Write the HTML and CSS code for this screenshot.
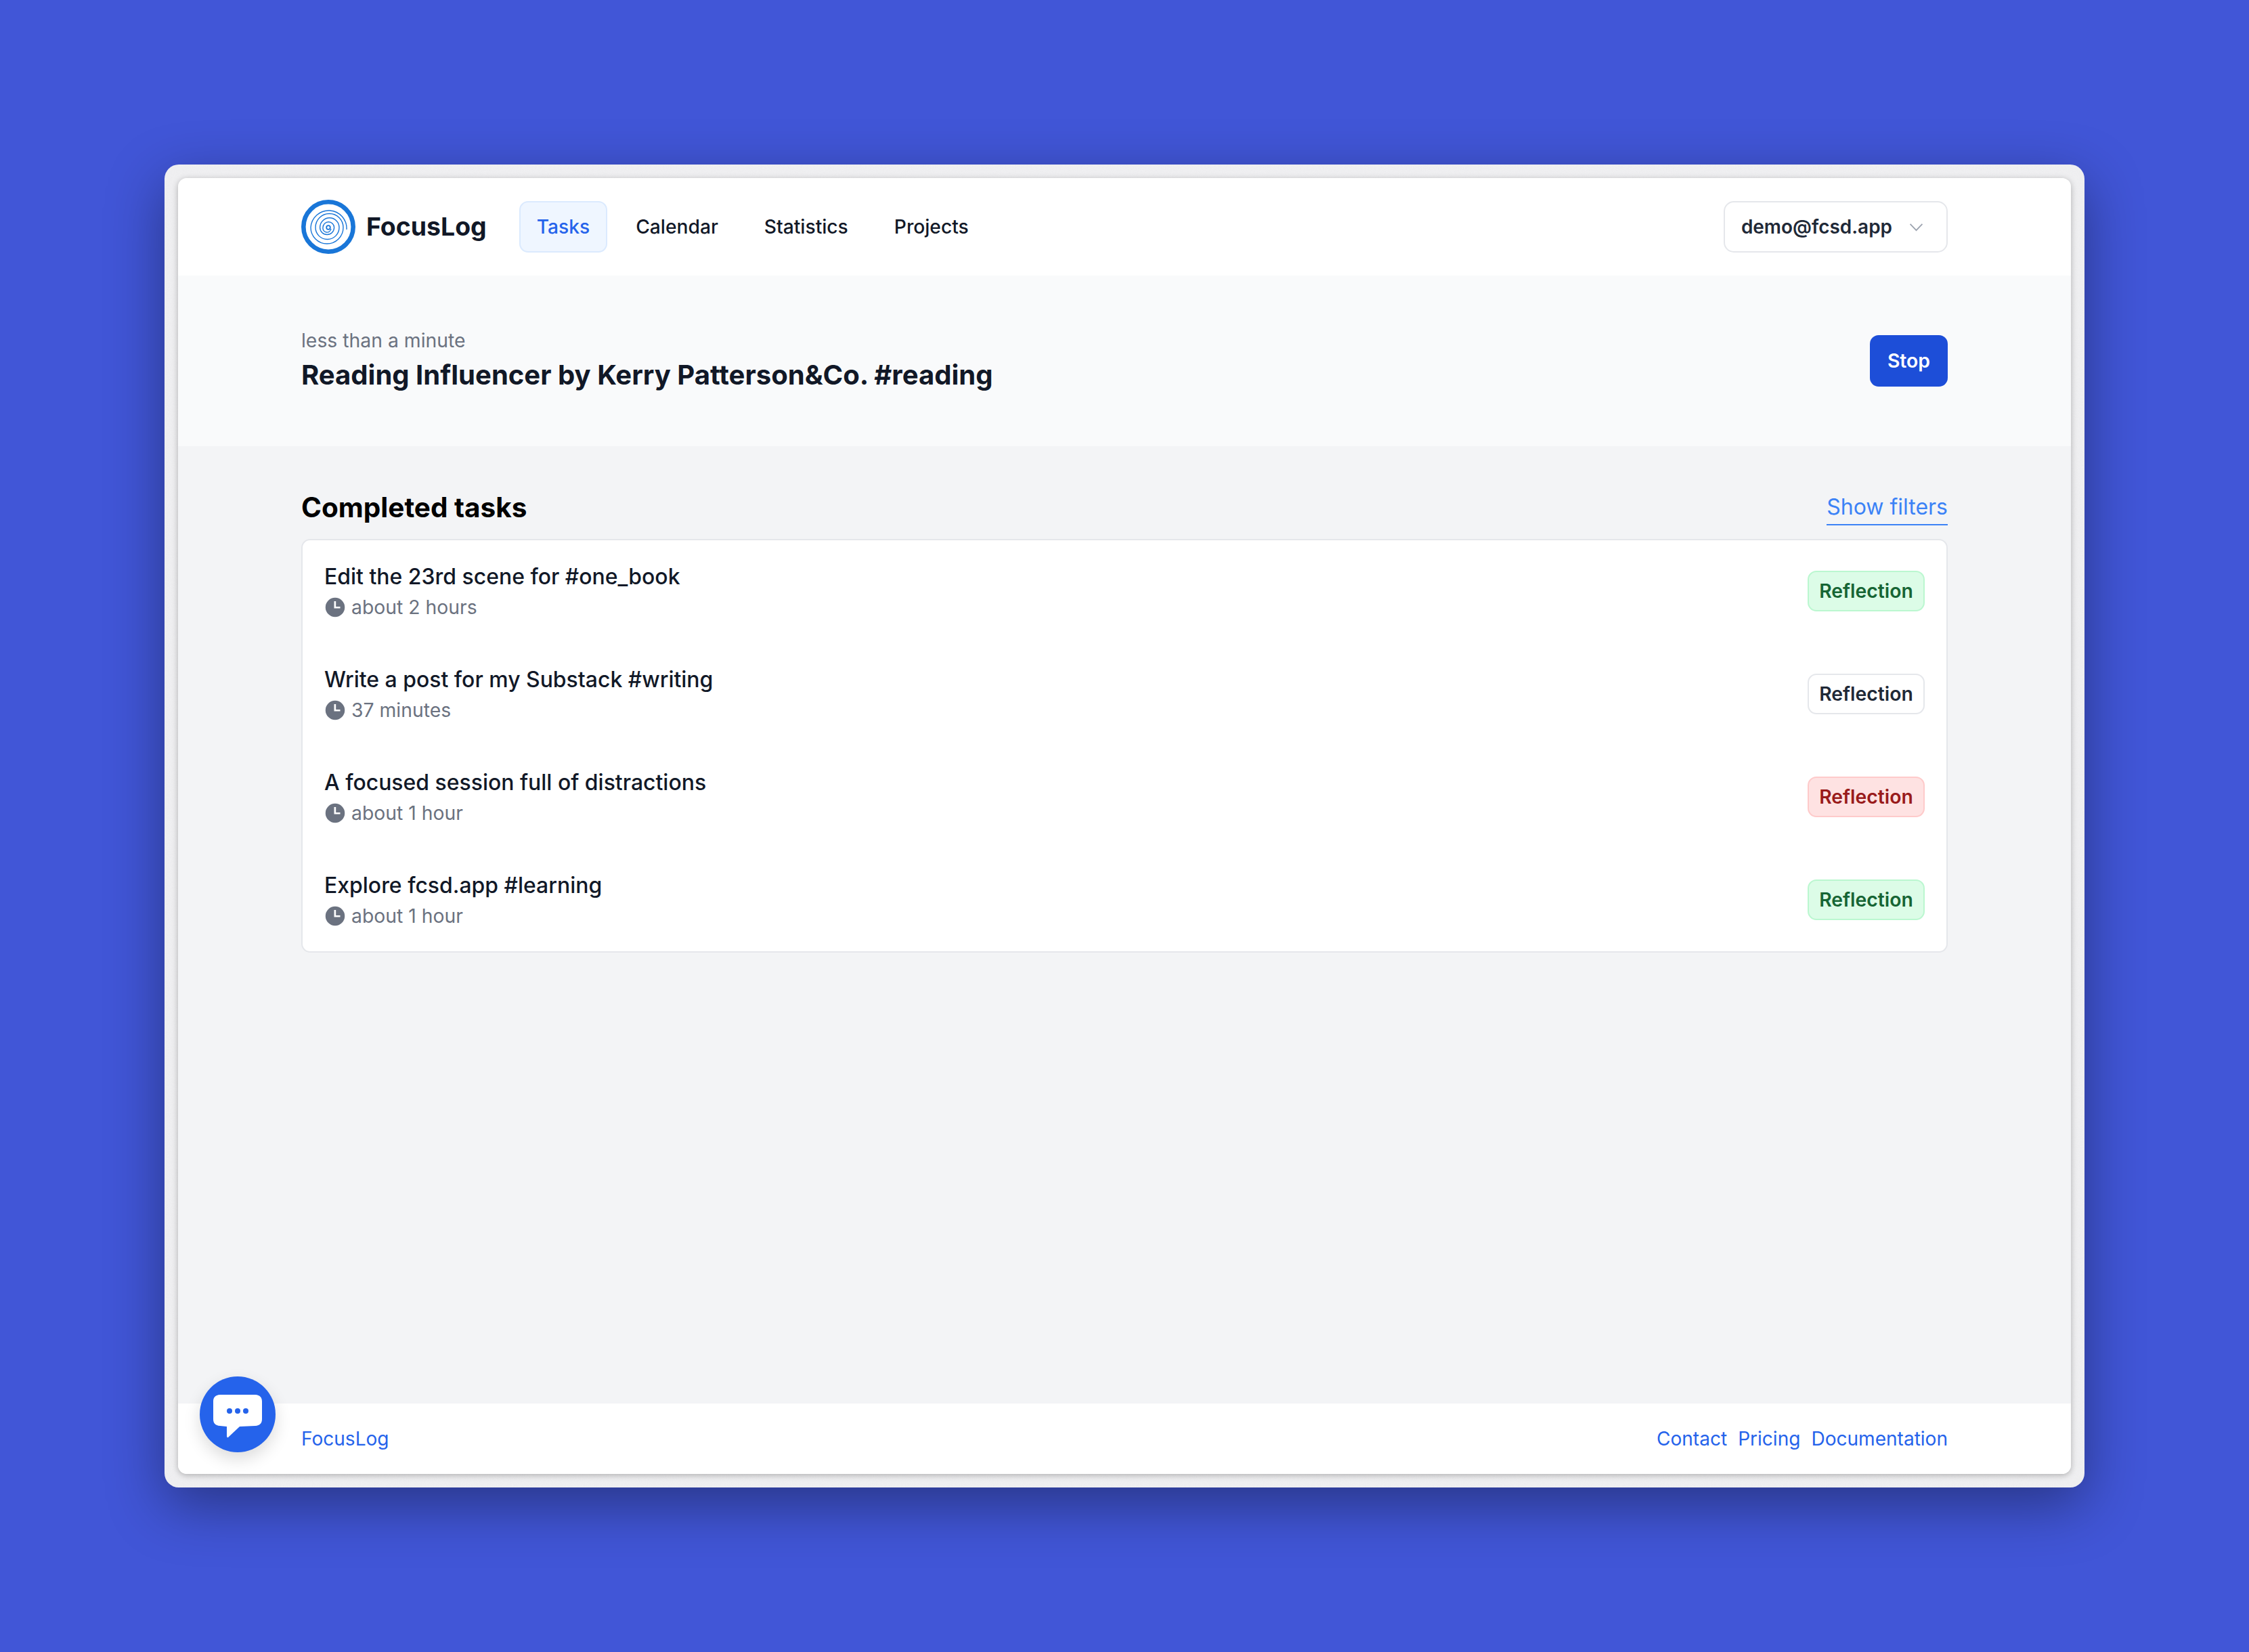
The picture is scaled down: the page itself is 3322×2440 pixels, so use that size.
FILE: index.html
```html
<!DOCTYPE html>
<html lang="en">
<head>
<meta charset="utf-8">
<title>FocusLog</title>
<link rel="stylesheet" href="styles.css">
</head>
<body>
<div class="frame">
  <svg class="grain" aria-hidden="true"><filter id="grain"><feTurbulence type="fractalNoise" baseFrequency="0.7" numOctaves="2" seed="4"/><feColorMatrix type="saturate" values="0.15"/></filter><rect width="100%" height="100%" filter="url(#grain)"/></svg>
  <div class="window">
    <header class="topbar">
      <a class="brand">
        <svg class="logo" viewBox="0 0 80 80" fill="none" stroke="#1976d8">
          <circle cx="40" cy="40" r="36.7" stroke-width="6.6"/>
          <path stroke-width="1.4" d="M67 44A26.5 26.5 0 0 0 14 41A24 24 0 0 0 62 41A20.500 20.500 0 0 0 21 41A17.500 17.500 0 0 0 56 41A14.200 14.200 0 0 0 27.600 41A10.500 10.500 0 0 0 48.600 41A8.300 8.300 0 0 0 32 41A6 6 0 0 0 44 43"/>
          <circle cx="40" cy="41" r="2.8" stroke-width="1.8"/>
        </svg>
        <span class="brand-name">FocusLog</span>
      </a>
      <nav class="nav">
        <a class="nav-item is-active">Tasks</a>
        <a class="nav-item">Calendar</a>
        <a class="nav-item">Statistics</a>
        <a class="nav-item">Projects</a>
      </nav>
      <button class="account">
        <span>demo@fcsd.app</span>
        <svg class="chevron" viewBox="0 0 20 20" fill="none" stroke="#9ca3af" stroke-width="1.7"><path d="M1.5 5.5 10 14.5 18.5 5.5"/></svg>
      </button>
    </header>

    <section class="current">
      <div>
        <div class="current-time">less than a minute</div>
        <div class="current-title">Reading Influencer by Kerry Patterson&amp;Co. #reading</div>
      </div>
      <button class="stop">Stop</button>
    </section>

    <main class="main">
      <div class="main-head">
        <h2 class="main-title">Completed tasks</h2>
        <a class="filters">Show filters</a>
      </div>
      <ul class="tasks">
        <li class="task">
          <div>
            <div class="task-title">Edit the 23rd scene for #one_book</div>
            <div class="task-time"><svg class="clock" viewBox="0 0 20 20"><path fill-rule="evenodd" d="M10 .5a9.5 9.5 0 1 0 0 19 9.5 9.5 0 0 0 0-19ZM9 4v7h6V9.400h-4.200V4Z"/></svg>about 2 hours</div>
          </div>
          <button class="badge badge-good">Reflection</button>
        </li>
        <li class="task">
          <div>
            <div class="task-title">Write a post for my Substack #writing</div>
            <div class="task-time"><svg class="clock" viewBox="0 0 20 20"><path fill-rule="evenodd" d="M10 .5a9.5 9.5 0 1 0 0 19 9.5 9.5 0 0 0 0-19ZM9 4v7h6V9.400h-4.200V4Z"/></svg>37 minutes</div>
          </div>
          <button class="badge">Reflection</button>
        </li>
        <li class="task">
          <div>
            <div class="task-title">A focused session full of distractions</div>
            <div class="task-time"><svg class="clock" viewBox="0 0 20 20"><path fill-rule="evenodd" d="M10 .5a9.5 9.5 0 1 0 0 19 9.5 9.5 0 0 0 0-19ZM9 4v7h6V9.400h-4.200V4Z"/></svg>about 1 hour</div>
          </div>
          <button class="badge badge-bad">Reflection</button>
        </li>
        <li class="task">
          <div>
            <div class="task-title">Explore fcsd.app #learning</div>
            <div class="task-time"><svg class="clock" viewBox="0 0 20 20"><path fill-rule="evenodd" d="M10 .5a9.5 9.5 0 1 0 0 19 9.5 9.5 0 0 0 0-19ZM9 4v7h6V9.400h-4.200V4Z"/></svg>about 1 hour</div>
          </div>
          <button class="badge badge-good">Reflection</button>
        </li>
      </ul>
    </main>

    <footer class="footer">
      <a>FocusLog</a>
      <div class="footer-links">
        <a>Contact</a>
        <a>Pricing</a>
        <a>Documentation</a>
      </div>
    </footer>

    <button class="chat" aria-label="Chat">
      <svg viewBox="0 0 72 64" width="72" height="64"><path fill="#fff" fill-rule="evenodd" d="M10 0H62C69 .6 72 4 72 10V36C72 42 69 45.500 62 46L39 47 23 62C21.500 64 20 64 20 60V47L10 46C3 45.500 0 42 0 36V10C0 4 3 .6 10 0Z"/><circle cx="24" cy="24" r="4" fill="#2563eb"/><circle cx="36" cy="24" r="4" fill="#2563eb"/><circle cx="48" cy="24" r="4" fill="#2563eb"/></svg>
    </button>
  </div>
</div>
</body>
</html>
```

FILE: styles.css
```css
* { box-sizing: border-box; }

html, body { margin: 0; padding: 0; }

body {
  width: 3322px;
  height: 2440px;
  padding-top: 243px;
  background: #4156d7;
  font-family: Inter, "Liberation Sans", sans-serif;
  font-size: 28.35px;
  line-height: 42px;
  color: #111827;
}

a { text-decoration: none; }

button {
  font: inherit;
  margin: 0;
  background: none;
  cursor: pointer;
}

.frame {
  position: relative;
  width: 2836px;
  height: 1954px;
  margin: 0 auto;
  padding: 20px;
  border-radius: 21px;
  background: #f0f0f2;
  box-shadow: 0 26px 84px rgba(0, 0, 0, 0.38);
}

.grain {
  position: absolute;
  inset: 0;
  width: 100%;
  height: 100%;
  border-radius: 21px;
  opacity: 0.05;
}

.window {
  position: relative;
  display: flex;
  flex-direction: column;
  height: 100%;
  border-radius: 13px;
  background: #f3f4f6;
  box-shadow: 0 2px 10px rgba(0, 0, 0, 0.28);
}

.topbar {
  display: flex;
  align-items: center;
  flex: none;
  height: 144px;
  padding: 0 182px;
  border-radius: 13px 13px 0 0;
  background: #fff;
}

.brand {
  display: flex;
  align-items: center;
  gap: 16px;
  margin-right: 48px;
}

.logo { width: 80px; height: 80px; flex: none; }

.brand-name {
  font-size: 37.4px;
  font-weight: 700;
  color: #111827;
}

.nav { display: flex; gap: 16px; align-items: center; font-size: 28.2px; }

.nav-item {
  height: 76px;
  padding: 0 24px;
  display: flex;
  align-items: center;
  border: 2px solid transparent;
  border-radius: 13px;
  font-weight: 500;
  color: #111827;
}

.is-active {
  border-color: #dbeafe;
  background: #eff6ff;
  color: #2563eb;
}

.account {
  display: flex;
  align-items: center;
  gap: 25px;
  height: 76px;
  margin-left: auto;
  padding: 0 34px 0 24px;
  border: 2px solid #e5e7eb;
  border-radius: 15px;
  background: #fff;
  font-size: 27.95px;
  font-weight: 600;
  color: #1f2937;
}

.chevron { width: 21px; height: 21px; }

.current {
  display: flex;
  align-items: center;
  justify-content: space-between;
  flex: none;
  height: 252px;
  padding: 0 182px;
  background: #f9fafb;
}

.current-time {
  color: #6b7280;
  line-height: 42px;
}

.current-title {
  font-size: 40.05px;
  font-weight: 700;
  line-height: 60px;
  color: #111827;
}

.stop {
  height: 76px;
  padding: 0 26px;
  border: 0;
  border-radius: 13px;
  background: #1d4ed8;
  color: #fff;
  font-weight: 600;
}

.main {
  flex: 1;
  padding: 67px 182px 0;
}

.main-head {
  display: flex;
  align-items: flex-start;
  justify-content: space-between;
  height: 50px;
  margin-bottom: 20px;
}

.main-title {
  margin: 0;
  font-size: 40.5px;
  font-weight: 700;
  line-height: 48px;
  color: #000;
}

.filters {
  padding-bottom: 2px;
  border-bottom: 2px solid #3b82f6;
  font-size: 32px;
  line-height: 46px;
  color: #3b82f6;
}

.tasks {
  height: 611px;
  margin: 0;
  padding: 0;
  list-style: none;
  border: 2px solid #e5e7eb;
  border-radius: 13px;
  background: #fff;
}

.task {
  display: flex;
  align-items: center;
  justify-content: space-between;
  height: 152px;
  padding: 0 32px 2px;
}

.task-title {
  font-size: 31.95px;
  font-weight: 450;
  line-height: 48px;
  color: #111827;
}

.task-time {
  display: flex;
  align-items: center;
  gap: 9px;
  line-height: 42px;
  color: #6b7280;
}

.clock {
  width: 30px;
  height: 30px;
  margin-left: 1px;
  fill: #6b7280;
}

.badge {
  height: 60px;
  width: 173px;
  padding: 0;
  border: 2px solid #e5e7eb;
  border-radius: 13px;
  background: #fff;
  font-weight: 600;
  color: #1f2937;
}

.badge-good {
  border-color: #bbf7d0;
  background: #dcfce7;
  color: #166534;
}

.badge-bad {
  border-color: #fecaca;
  background: #fee2e2;
  color: #991b1b;
}

.footer {
  display: flex;
  align-items: center;
  justify-content: space-between;
  flex: none;
  height: 104px;
  padding: 0 182px;
  border-radius: 0 0 13px 13px;
  background: #fff;
  font-size: 28.05px;
  color: #2563eb;
}

.footer-links { display: flex; gap: 16px; }

.chat {
  position: absolute;
  left: 32px;
  bottom: 32px;
  display: flex;
  align-items: center;
  justify-content: center;
  width: 112px;
  height: 112px;
  padding: 6px 0 0;
  border: 0;
  border-radius: 50%;
  background: #2563eb;
  box-shadow: 0 10px 24px rgba(0, 0, 0, 0.14);
}
```
